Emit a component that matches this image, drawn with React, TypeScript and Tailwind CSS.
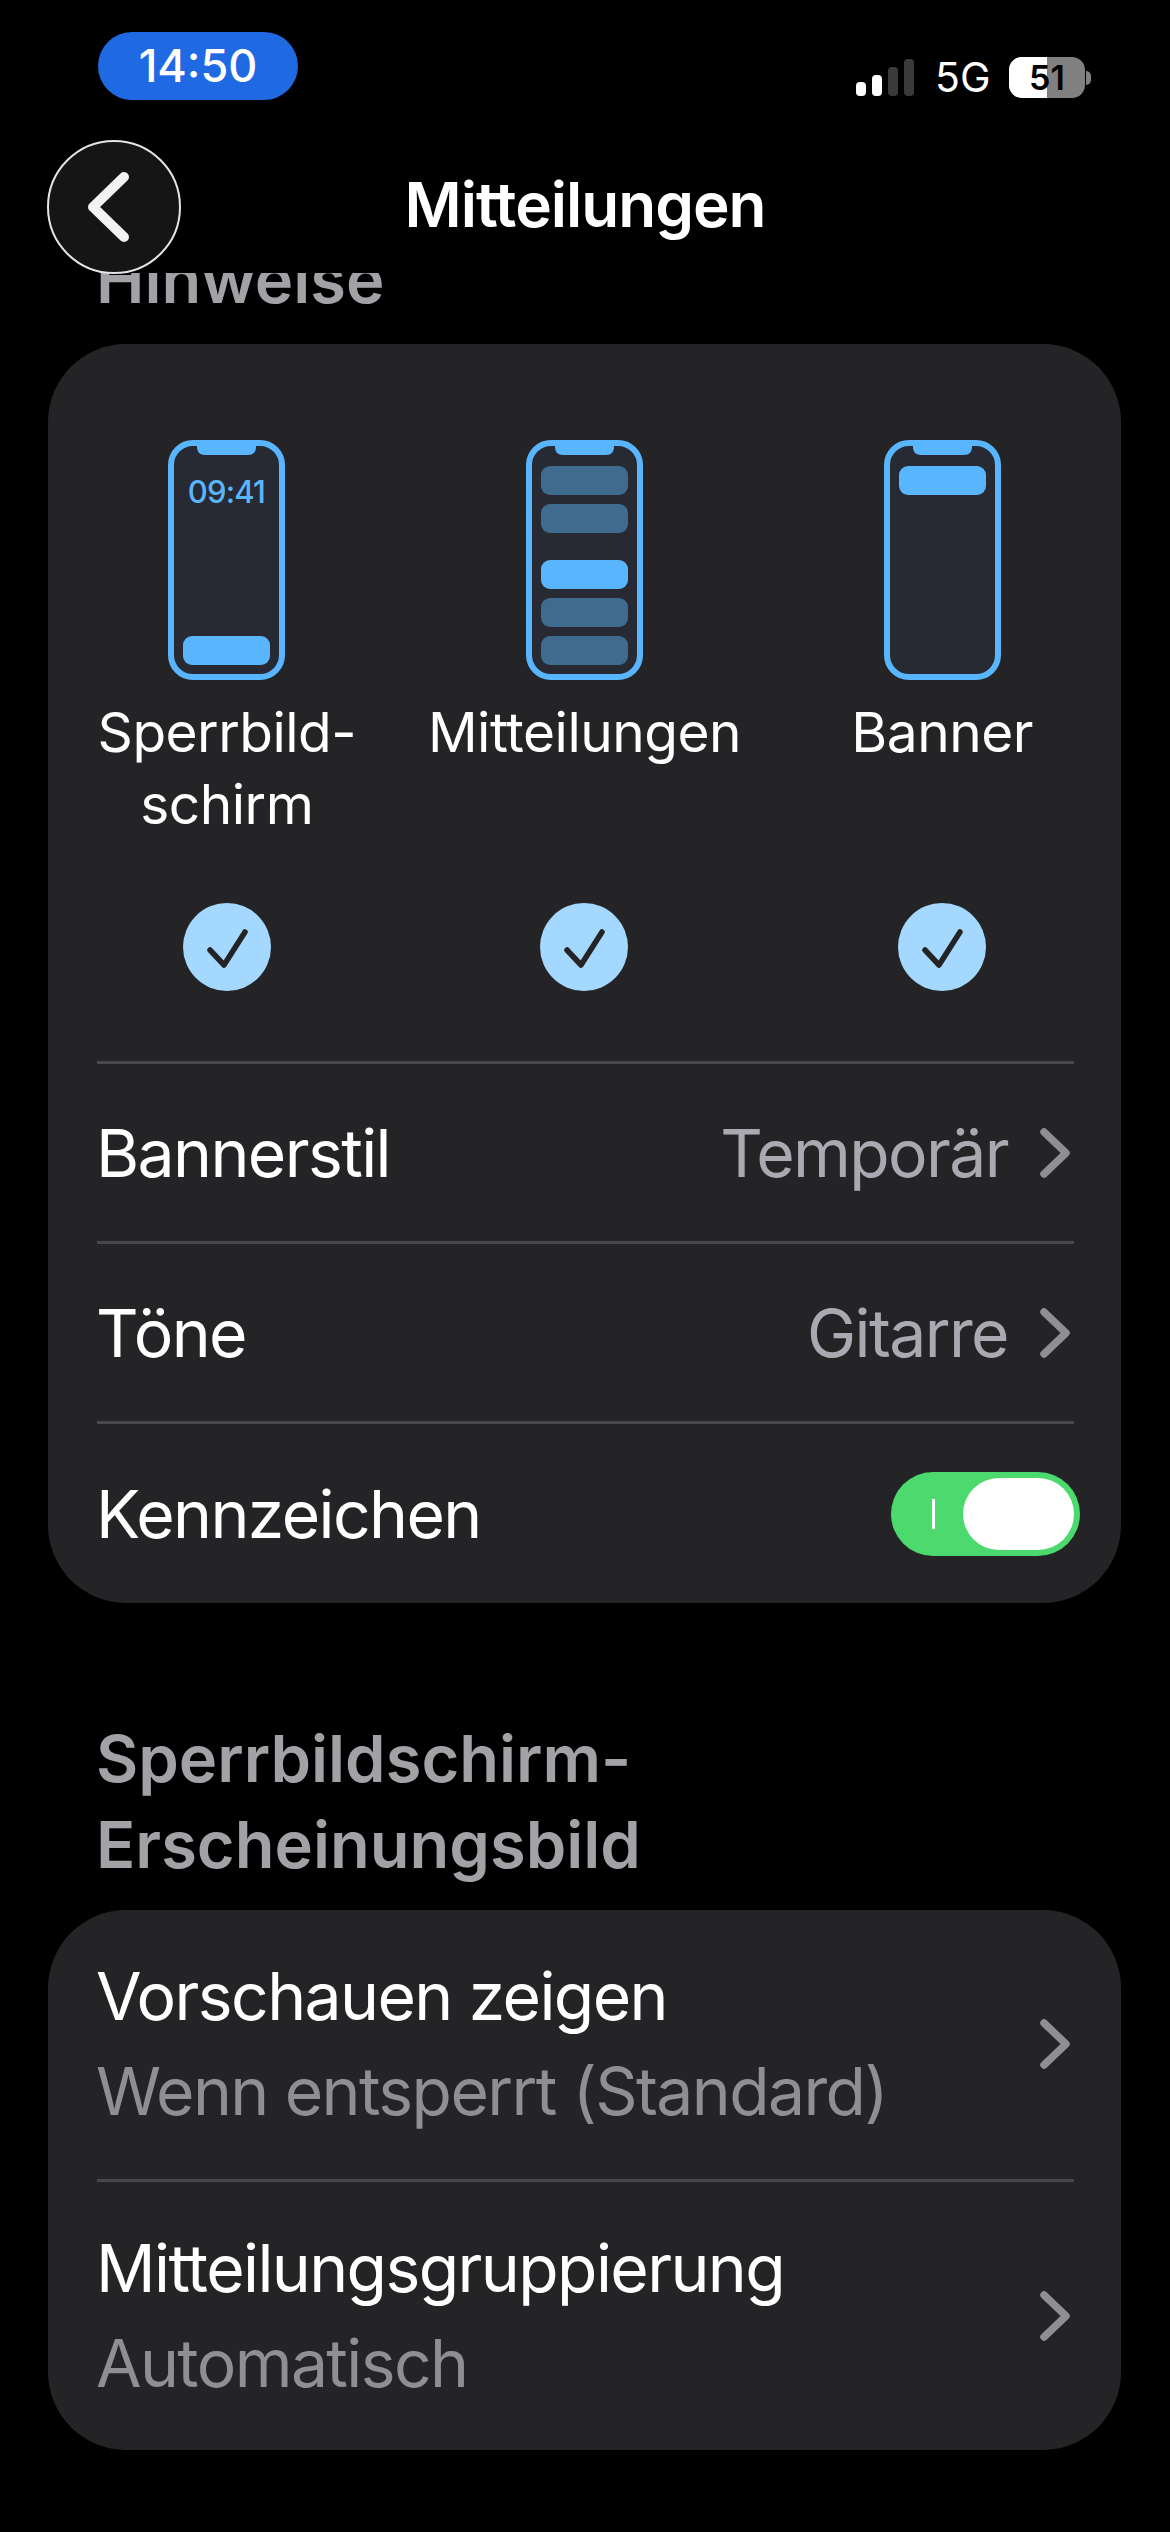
function Phone({ kind }: { kind: "lock" | "list" | "banner" }) {
  const blue = "#5ab5ff";
  const dim = "#3f6b8f";
  const card = (y: number, fill: string) => <rect key={y} x="15" y={y} width="87" height="29" rx="9" fill={fill} />;
  return (
    <svg width="117" height="240" viewBox="0 0 117 240" className="block">
      <rect x="3" y="3" width="111" height="234" rx="22" fill="#272a32" stroke={blue} strokeWidth="6" />
      <path d="M29 2h59v5c0 5-3 8-8 8H37c-5 0-8-3-8-8z" fill={blue} />
      {kind === "lock" && (
        <>
          <text x="58.5" y="63" textAnchor="middle" fill={blue} fontSize="31" fontWeight="500" fontFamily="Inter, sans-serif" letterSpacing="-0.8">09:41</text>
          {card(196, blue)}
        </>
      )}
      {kind === "list" && (
        <>
          {card(26, dim)}
          {card(64, dim)}
          {card(120, blue)}
          {card(158, dim)}
          {card(196, dim)}
        </>
      )}
      {kind === "banner" && card(26, blue)}
    </svg>
  );
}

function Check() {
  return (
    <div className="w-[88px] h-[88px] rounded-full bg-[#a5d8ff] flex items-center justify-center">
      <svg width="88" height="88" viewBox="0 0 88 88" fill="none">
        <path d="M27 47 L41 62 L62 29" stroke="#242426" strokeWidth="5.5" strokeLinecap="round" strokeLinejoin="round" />
      </svg>
    </div>
  );
}

function Chevron() {
  return (
    <svg width="30" height="50" viewBox="0 0 30 50" fill="none" className="shrink-0">
      <path d="M4 4 L26 25 L4 46" stroke="#8e8e93" strokeWidth="7.5" strokeLinecap="round" strokeLinejoin="round" />
    </svg>
  );
}

function Divider() {
  return <div className="h-[3px] ml-[49px] mr-[47px] bg-[#48484a]" />;
}

function ValueRow({ label, value }: { label: string; value: string }) {
  return (
    <div className="h-[177px] pl-[48px] pr-[51px] flex items-center justify-between">
      <span className="text-[66px] tracking-[-1.6px] leading-none text-white">{label}</span>
      <span className="flex items-center gap-[32px]">
        <span className="text-[66px] tracking-[-1.6px] leading-none text-[#a9aab1]">{value}</span>
        <Chevron />
      </span>
    </div>
  );
}

function SubRow({ title, sub }: { title: string; sub: string }) {
  return (
    <div className="flex-1 pl-[48px] pr-[51px] flex items-center justify-between">
      <div className="flex flex-col gap-[24px]">
        <span className="text-[66px] tracking-[-1.6px] leading-[71px] text-white">{title}</span>
        <span className="text-[66px] tracking-[-1.6px] leading-[71px] text-[#8e8e93]">{sub}</span>
      </div>
      <Chevron />
    </div>
  );
}

export default function App() {
  return (
    <div className="w-[1170px] h-[2532px] bg-black overflow-hidden flex flex-col font-['Inter',sans-serif] antialiased">
      <div className="h-[134px] shrink-0 relative flex items-start justify-between pl-[98px] pr-[79px]">
        <div className="mt-[32px] w-[200px] h-[68px] rounded-[34px] bg-[#1f69e2] flex items-center justify-center text-white text-[45px] font-medium">14:50</div>
        <div className="mt-[57px] flex items-center">
          <div className="flex items-end gap-[6px] h-[37px]">
            <div className="w-[10px] h-[14px] rounded-[4px] bg-white" />
            <div className="w-[10px] h-[21px] rounded-[4px] bg-white" />
            <div className="w-[10px] h-[29px] rounded-[4px] bg-[#3a3a3a]" />
            <div className="w-[10px] h-[37px] rounded-[4px] bg-[#3a3a3a]" />
          </div>
          <span className="ml-[21px] w-[74px] text-white text-[41px] leading-none">5G</span>
          <div className="relative w-[76px] h-[41px] rounded-[13px] overflow-hidden bg-[#808080]">
            <div className="absolute left-0 top-0 bottom-0 w-[38px] bg-white" />
            <div className="absolute inset-0 flex items-center justify-center text-[34px] font-semibold text-black leading-none">51</div>
          </div>
          <div className="w-[5px] h-[14px] ml-[1px] rounded-r-full bg-[#808080]" />
        </div>
      </div>
      <div className="h-[139px] shrink-0 relative flex items-center justify-center">
        <div className="absolute left-[47px] top-[6px] w-[134px] h-[134px] rounded-full bg-[#151516] border-2 border-[#e5e5e5] z-10 flex items-center justify-center">
          <svg width="134" height="134" viewBox="0 0 134 134" fill="none" className="shrink-0">
            <path d="M77 37 L46 67 L77 97" stroke="#f2f2f2" strokeWidth="10" strokeLinecap="round" strokeLinejoin="round" />
          </svg>
        </div>
        <h1 className="mt-[3px] text-[62px] tracking-[-1px] font-semibold text-white leading-none">Mitteilungen</h1>
      </div>
      <div className="flex-1 overflow-hidden">
        <h2 className="mt-[-36px] ml-[96px] text-[65px] leading-[86px] font-semibold text-[#a1a1a6]">Hinweise</h2>
        <div className="mt-[21px] mx-[48px] w-[1073px] h-[1259px] rounded-[78px] bg-[#242426] flex flex-col">
          <div className="grid grid-cols-3 pt-[96px] h-[717px]">
            {[
              { k: "lock" as const, t: ["Sperrbild-", "schirm"] },
              { k: "list" as const, t: ["Mitteilungen"] },
              { k: "banner" as const, t: ["Banner"] },
            ].map((c) => (
              <div key={c.k} className="flex flex-col items-center">
                <Phone kind={c.k} />
                <div className="mt-[16px] h-[207px] text-center text-[55px] tracking-[-0.5px] leading-[72px] text-white">
                  {c.t.map((l) => <div key={l}>{l}</div>)}
                </div>
                <Check />
              </div>
            ))}
          </div>
          <Divider />
          <ValueRow label="Bannerstil" value="Temporär" />
          <Divider />
          <ValueRow label="Töne" value="Gitarre" />
          <Divider />
          <div className="flex-1 pl-[48px] pr-[41px] flex items-center justify-between">
            <span className="text-[66px] tracking-[-1.6px] leading-none text-white">Kennzeichen</span>
            <div className="relative w-[189px] h-[84px] rounded-full bg-[#4cd96d]">
              <div className="absolute left-[41px] top-[27px] w-[3px] h-[30px] bg-white" />
              <div className="absolute right-[6px] top-[6px] w-[111px] h-[72px] rounded-full bg-white" />
            </div>
          </div>
        </div>
        <h2 className="mt-[113px] ml-[96px] text-[65px] leading-[86px] font-semibold text-[#a1a1a6]">Sperrbildschirm-<br />Erscheinungsbild</h2>
        <div className="mt-[22px] mx-[48px] w-[1073px] h-[540px] rounded-[78px] bg-[#242426] flex flex-col">
          <SubRow title="Vorschauen zeigen" sub="Wenn entsperrt (Standard)" />
          <Divider />
          <SubRow title="Mitteilungsgruppierung" sub="Automatisch" />
        </div>
      </div>
    </div>
  );
}
